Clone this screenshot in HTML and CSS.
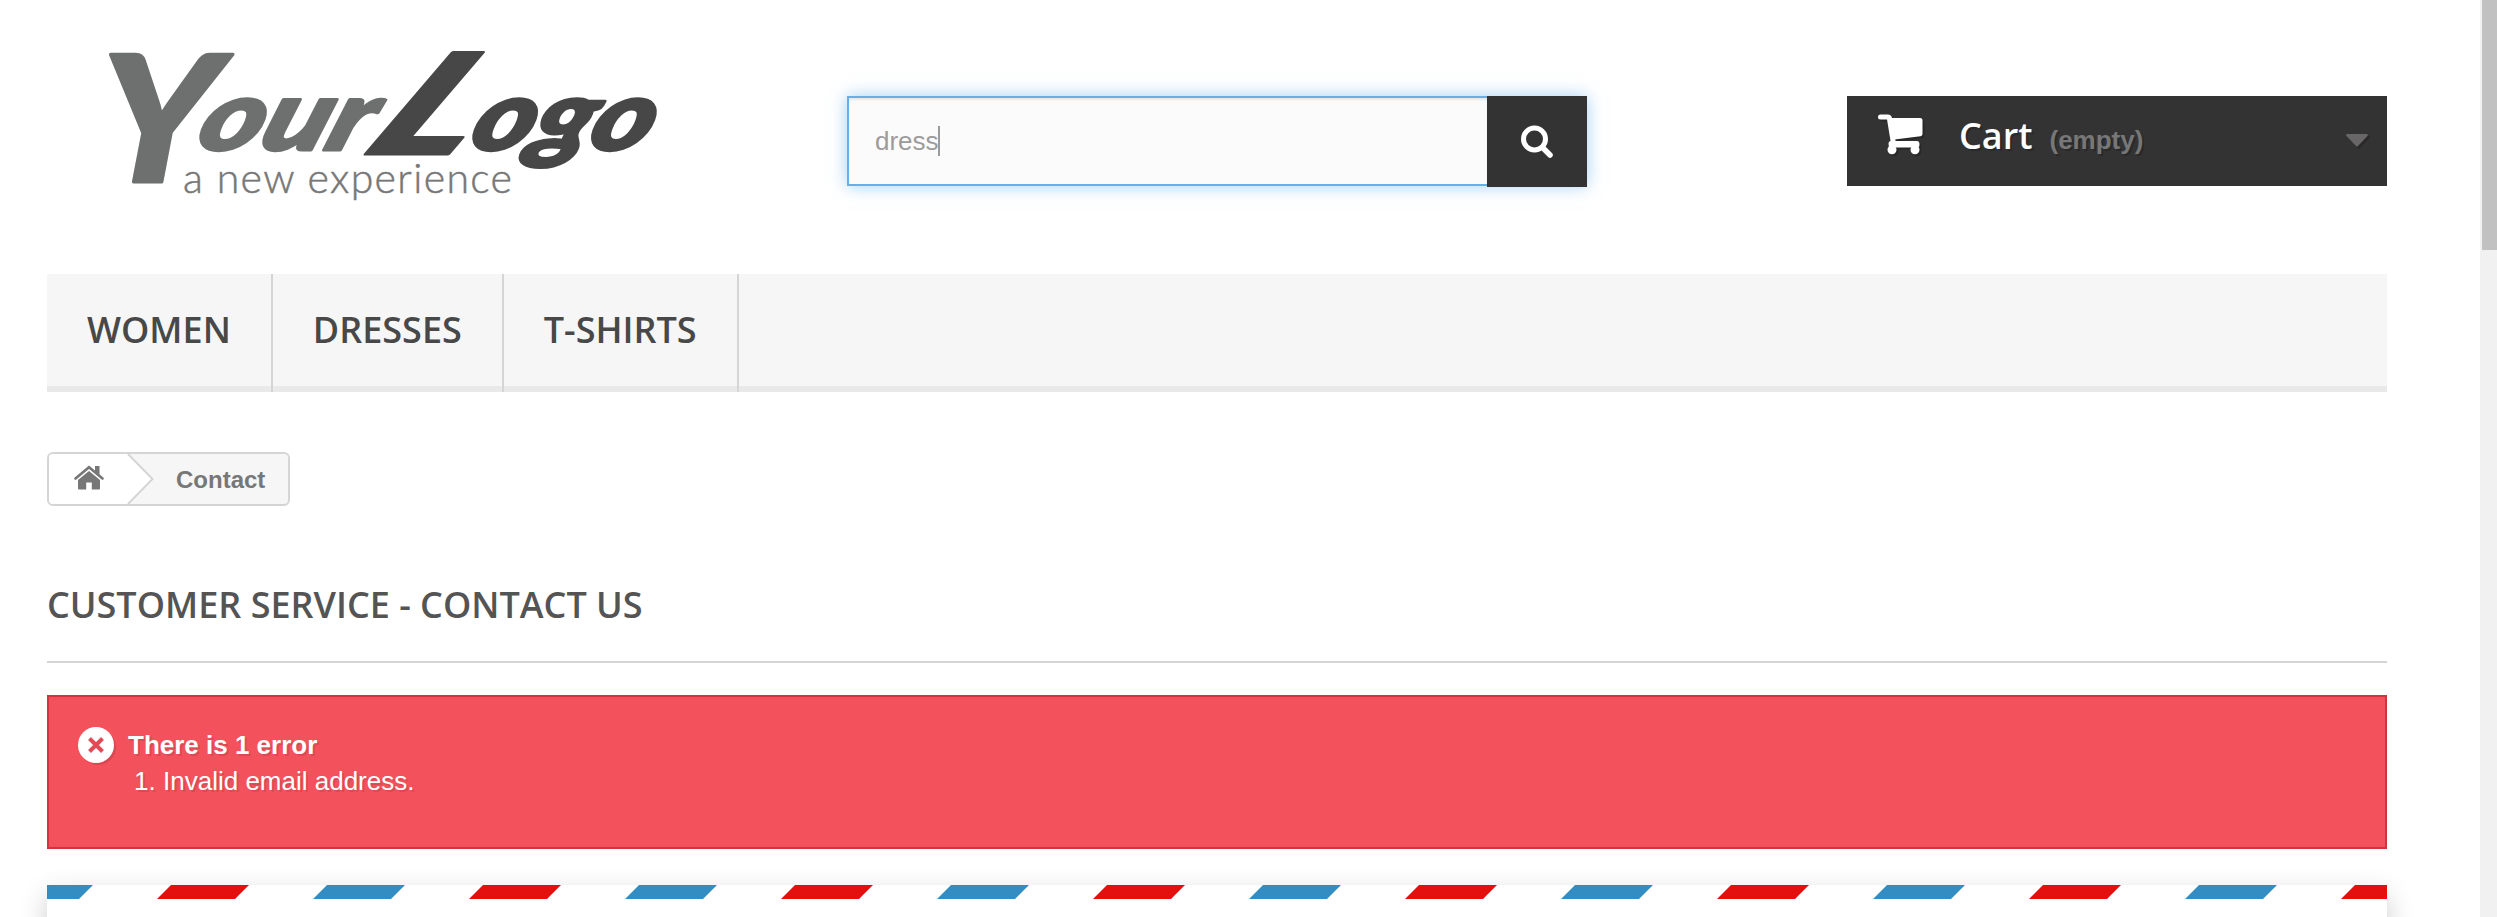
FILE: index.html
```html
<!DOCTYPE html>
<html lang="en">
<head>
<meta charset="utf-8">
<title>Contact us</title>
<link rel="stylesheet" href="styles.css">
</head>
<body>
<div class="viewport">
  <main class="container">
    <header class="header">
      <a class="logo">
        <svg width="700" height="230" viewBox="47 0 700 230">
          <g class="brand">
            <g class="brand-light">
              <text transform="translate(95 182) skewX(-3)" font-size="176" textLength="120" lengthAdjust="spacingAndGlyphs">Y</text>
              <text transform="translate(193 150) skewX(-20)" font-size="98" textLength="172" lengthAdjust="spacingAndGlyphs">our</text>
            </g>
            <g class="brand-dark">
              <text transform="translate(359 154) skewX(-34)" font-size="140" textLength="100" lengthAdjust="spacingAndGlyphs">L</text>
              <text transform="translate(466 150) skewX(-20)" font-size="98" textLength="180" lengthAdjust="spacingAndGlyphs">ogo</text>
            </g>
          </g>
          <text class="tagline" x="183" y="193" textLength="329">a new experience</text>
        </svg>
      </a>
      <form class="search">
        <div class="search-field"><span>dress</span><i class="caret"></i></div>
        <button class="search-button" type="button" aria-label="Search">
          <svg width="34" height="34" viewBox="0 0 34 34"><circle cx="14.5" cy="14" r="11" fill="none" stroke="#fff" stroke-width="5"/><path d="M22.500 22.500L30 30" stroke="#fff" stroke-width="5.500" stroke-linecap="round"/></svg>
        </button>
      </form>
      <a class="cart">
        <svg class="cart-icon" width="48" height="42" viewBox="0 0 48 42"><path d="M3.500 2.500H10.500Q12.500 2.500 12.500 4.500L16 26" transform="translate(0 .5)" fill="none" stroke="#fff" stroke-width="5" stroke-linecap="round" stroke-linejoin="round"/><path d="M12 4H43Q45.500 4 45.500 6.500V20Q45.500 22 43.500 22.300L17.500 25.500Z" fill="#fff"/><path d="M14 27H40Q42.500 27 42.500 30.500T40 33.500H14Q11.500 33 11.500 30T14 27Z" fill="#fff"/><circle cx="15" cy="35.800" r="4.500" fill="#fff"/><circle cx="38" cy="35.800" r="4.500" fill="#fff"/></svg>
        <b class="cart-label">Cart</b>
        <span class="cart-state">(empty)</span>
        <svg class="cart-arrow" width="24" height="17" viewBox="0 0 24 17"><path d="M2 1H22Q23.500 1.500 22.500 3L13 13Q12 14 11 13L1.500 3Q.5 1.500 2 1Z" fill="#686666"/></svg>
      </a>
    </header>

    <nav class="menu">
      <a>Women</a><a>Dresses</a><a>T-shirts</a>
    </nav>

    <div class="breadcrumb">
      <span class="home">
        <svg width="30" height="25" viewBox="0 0 30 25"><path d="M15 6L26 15V23.500Q26 24.500 25 24.500H17.800V17.500H12.200V24.500H5Q4 24.500 4 23.500V15Z" fill="#777"/><path d="M1.500 13.500L15 2.200L28.500 13.500" fill="none" stroke="#777" stroke-width="2.600" stroke-linecap="round"/><path d="M21 1H25.500V10.500L21 7Z" fill="#777"/></svg>
      </span>
      <svg class="chevron" width="28" height="50" viewBox="0 0 28 50"><path d="M0 0H2L26 25L2 50H0Z" fill="#fff"/><path d="M1 0L25.500 25L1 50" fill="none" stroke="#d6d4d4" stroke-width="2"/></svg>
      <span class="current">Contact</span>
    </div>

    <h1 class="title">Customer service - Contact us</h1>

    <section class="alert">
      <svg class="alert-icon" width="36" height="36" viewBox="0 0 36 36"><circle cx="18" cy="18" r="18" fill="#fff"/><path d="M11.500 11.500L24.500 24.500M24.500 11.500L11.500 24.500" stroke="#e24b56" stroke-width="4"/></svg>
      <div>
        <p>There is 1 error</p>
        <ol><li>Invalid email address.</li></ol>
      </div>
    </section>

    <section class="letter">
      <svg width="2340" height="14">
        <defs><pattern id="airmail" width="312" height="14" patternUnits="userSpaceOnUse"><path d="M0 0H46L32 14H0ZM280 0H312V14H266Z" fill="#338dc2"/><path d="M124 0H202L188 14H110Z" fill="#e40f0f"/></pattern></defs>
        <rect width="2340" height="14" fill="url(#airmail)"/>
      </svg>
    </section>
  </main>
  <div class="scrollbar"><div class="thumb"></div></div>
</div>
</body>
</html>
```
FILE: styles.css
```css
* { box-sizing: border-box; }
body { margin: 0; background: #fff; font: 26px/36px Arial, "Liberation Sans", sans-serif; color: #777; }
.viewport { display: flex; justify-content: space-between; height: 917px; overflow: hidden; }
.container { width: 2340px; margin-left: 47px; }

.header { display: flex; align-items: flex-start; height: 274px; }
.logo { width: 800px; }
.logo svg { display: block; overflow: visible; }
.brand { font-family: Lato, sans-serif; font-weight: 900; font-style: italic; stroke-width: 3; stroke-linejoin: round; }
.brand-light { fill: #6d706f; stroke: #6d706f; }
.brand-dark { fill: #474747; stroke: #474747; }
.tagline { font: 300 41px Lato, sans-serif; fill: #777; stroke: #777; stroke-width: .5; }

.search { display: flex; width: 740px; height: 90px; margin-top: 96px; box-shadow: 0 0 16px rgba(102, 175, 233, .6); }
.search-field { display: flex; align-items: center; width: 640px; height: 90px; padding-left: 26px; border: 2px solid #66afe9; border-right: 0; background: #fbfbfb; box-shadow: inset 0 2px 2px rgba(0, 0, 0, .075); color: #9c9b9b; }
.caret { width: 2px; height: 30px; margin-left: -1px; background: #9c9b9b; }
.search-button { display: flex; align-items: center; justify-content: center; width: 100px; height: 91px; padding: 0; border: 0; background: #333; }

.cart { display: flex; width: 540px; height: 90px; margin: 96px 0 0 260px; padding: 0 18px 0 30px; background: #333; text-shadow: 2px 2px rgba(0, 0, 0, .2); }
.cart-icon { margin-top: 18px; filter: drop-shadow(2px 2px 0 rgba(0, 0, 0, .2)); }
.cart-label { margin: 15px 0 0 34px; color: #fff; font: 600 36px/50px "Open Sans", sans-serif; }
.cart-state { margin: 26px 0 0 17px; font-weight: 700; }
.cart-arrow { margin: 37px 0 0 auto; filter: drop-shadow(2px 2px 0 rgba(0, 0, 0, .2)); }

.menu { display: flex; height: 118px; background: #f6f6f6; box-shadow: inset 0 -6px #e9e9e9; }
.menu a { padding: 31px 40px 0; border-right: 2px solid #d6d4d4; color: #484848; font: 600 36px/50px "Open Sans", sans-serif; text-transform: uppercase; }

.breadcrumb { display: flex; width: 243px; height: 54px; margin-top: 60px; border: 2px solid #d6d4d4; border-radius: 6px; background: #f6f6f6; overflow: hidden; font-weight: 700; font-size: 24px; line-height: 51px; }
.home { display: flex; width: 78px; padding: 11px 0 0 25px; background: #fff; }
.chevron { flex: none; }
.current { margin-left: 21px; }

.title { height: 91px; margin: 66px 0 0; border-bottom: 2px solid #d6d4d4; color: #555454; font: 600 36px/66px "Open Sans", sans-serif; text-transform: uppercase; }

.alert { display: flex; height: 154px; margin-top: 32px; padding: 30px 29px; border: 2px solid #d4323d; background: #f3515c; color: #fff; text-shadow: 2px 2px rgba(0, 0, 0, .1); }
.alert-icon { flex: none; margin-right: 14px; filter: drop-shadow(2px 2px 0 rgba(0, 0, 0, .1)); }
.alert p { margin: 0; font-weight: 700; }
.alert ol { margin: 0; padding-left: 35px; }

.letter { height: 600px; margin-top: 36px; background: #fff; box-shadow: 0 10px 26px rgba(0, 0, 0, .2); }
.letter svg { display: block; }

.scrollbar { width: 17px; padding-left: 2px; background: #f1f1f1; }
.thumb { height: 250px; background: #c1c1c1; }
```
